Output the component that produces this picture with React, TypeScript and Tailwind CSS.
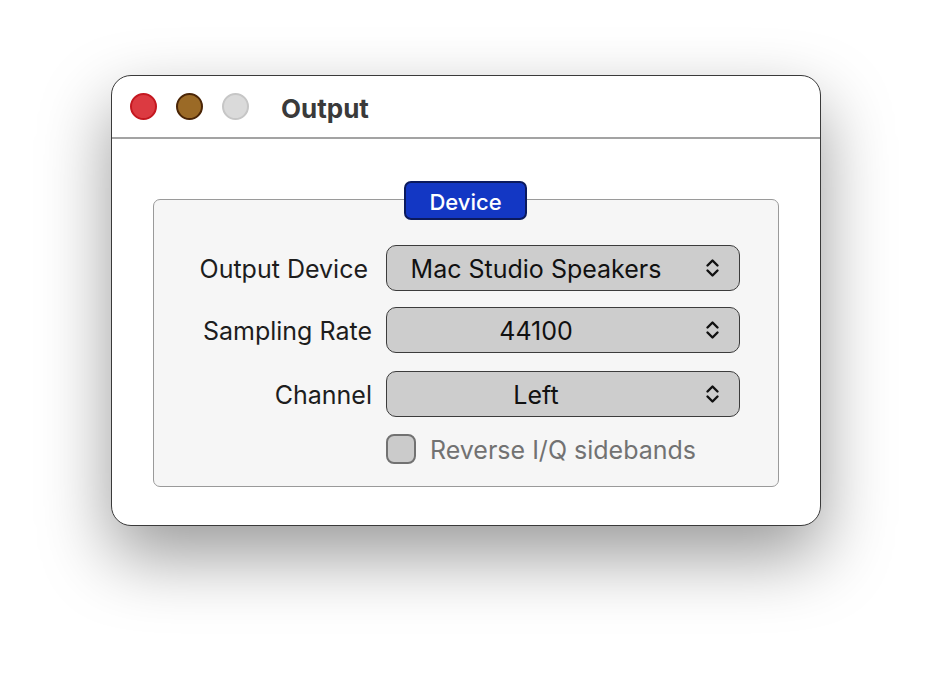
import React from "react";

const font = { fontFamily: "Inter, 'Noto Sans', sans-serif" };

function Chevrons() {
  return (
    <svg width="15" height="22" viewBox="0 0 15 22" fill="none" stroke="#111" strokeWidth="2.4" strokeLinecap="round" strokeLinejoin="round">
      <path d="M2.5 8.5 L7.5 3.5 L12.5 8.5" />
      <path d="M2.5 13.5 L7.5 18.5 L12.5 13.5" />
    </svg>
  );
}

function Popup({ value }: { value: string }) {
  return (
    <div className="flex h-[46px] w-[354px] items-center rounded-[10px] border-[1.5px] border-[#3c3c3c] bg-[#cdcdcd] pr-[19px]">
      <span className="flex-1 pl-[10px] pr-[30px] pt-[3px] text-center text-[25px] leading-none text-[#111]">{value}</span>
      <Chevrons />
    </div>
  );
}

function Row({ label, value, className }: { label: string; value: string; className?: string }) {
  return (
    <div className={"flex items-center " + (className ?? "")}>
      <span className="w-[218px] pr-[14px] pt-[3px] text-right text-[25px] leading-none text-[#1d1d1d]">{label}</span>
      <Popup value={value} />
    </div>
  );
}

export default function App() {
  return (
    <div className="h-[674px] w-[932px] bg-white pl-[111px] pt-[75px]" style={font}>
      <div className="flex h-[451px] w-[710px] flex-col rounded-[20px] border-[1.5px] border-[#3a3a3a] bg-white shadow-[0_30px_70px_rgba(0,0,0,0.4)]">
        <div className="flex h-[63px] items-center border-b-2 border-[#a3a3a3] pl-[18px]">
          <div className="flex items-center gap-[19px]">
            <span className="h-[27px] w-[27px] rounded-full border-2 border-[#c41820] bg-[#dc3a41]" />
            <span className="h-[27px] w-[27px] rounded-full border-2 border-[#4a2506] bg-[#9b6a26]" />
            <span className="h-[27px] w-[27px] rounded-full border-2 border-[#c6c6c6] bg-[#dadada]" />
          </div>
          <span className="ml-[32px] mt-[4px] text-[26px] font-bold leading-none text-[#3a3a3a]">Output</span>
        </div>
        <div className="flex flex-1 px-[41px] pt-[60px]">
          <div className="relative h-[288px] w-[626px] rounded-[7px] border-[1.5px] border-[#9a9a9a] bg-[#f6f6f6] pl-[14px] pt-[45px]">
            <div className="absolute left-[250px] top-[-19px] flex h-[39px] w-[123px] items-center justify-center rounded-[7px] border-2 border-[#0b1a5e] bg-[#1337c4] pt-[2px] text-[22px] font-medium leading-none text-white">
              Device
            </div>
            <Row label="Output Device" value="Mac Studio Speakers" className="[&>span:first-child]:pr-[18px]" />
            <Row label="Sampling Rate" value="44100" className="mt-[16px]" />
            <Row label="Channel" value="Left" className="mt-[18px]" />
            <div className="mt-[17px] flex items-center pl-[218px]">
              <span className="h-[30px] w-[30px] rounded-[8px] border-2 border-[#727272] bg-[#cbcbcb]" />
              <span className="ml-[14px] pt-[3px] text-[25px] leading-none text-[#727272]">Reverse I/Q sidebands</span>
            </div>
          </div>
        </div>
      </div>
    </div>
  );
}
